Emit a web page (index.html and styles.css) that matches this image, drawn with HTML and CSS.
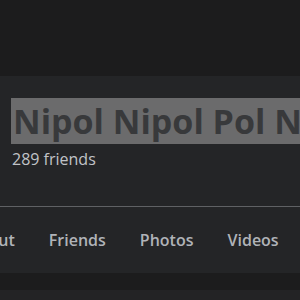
FILE: index.html
```html
<!DOCTYPE html>
<html lang="en">
<head>
  <meta charset="UTF-8">
  <title>Profile</title>
  <link rel="stylesheet" href="styles.css">
</head>
<body>
  <div class="cover"></div>
  <div class="profile-card">
    <div class="profile-info">
      <h1 class="profile-name"><span class="selected">Nipol Nipol Pol Nipol</span></h1>
      <div class="friend-count">289 friends</div>
    </div>
    <nav class="profile-tabs">
      <a class="tab">About</a>
      <a class="tab">Friends</a>
      <a class="tab">Photos</a>
      <a class="tab">Videos</a>
      <a class="tab">Check-ins</a>
    </nav>
  </div>
  <div class="next-card"></div>
</body>
</html>
```

FILE: styles.css
```css
body {
  margin: 0;
  background-color: #1c1c1d;
  font-family: "Open Sans", "Noto Sans", sans-serif;
  overflow: hidden;
  height: 300px;
}

.cover {
  height: 76px;
}

.profile-card {
  background-color: #242527;
}

.profile-info {
  padding: 21px 0 0 11px;
  height: 109px;
  border-bottom: 1px solid #5f6164;
  overflow: hidden;
}

.profile-name {
  margin: 0;
  font-size: 34px;
  font-weight: 700;
  line-height: 48px;
  white-space: nowrap;
  color: #38393b;
}

.selected {
  background-color: #6b6b6c;
  padding-left: 2px;
  padding-right: 40px;
}

.friend-count {
  margin-top: 4px;
  font-size: 16px;
  line-height: 20px;
  color: #c1c3c7;
  padding-left: 1px;
}

.profile-tabs {
  display: flex;
  height: 66px;
  align-items: center;
  margin-left: -32px;
  gap: 34px;
  white-space: nowrap;
}

.tab {
  font-size: 16px;
  font-weight: 600;
  color: #b0b3b8;
}

.next-card {
  margin-top: 17px;
  height: 20px;
  background-color: #232325;
}
```
